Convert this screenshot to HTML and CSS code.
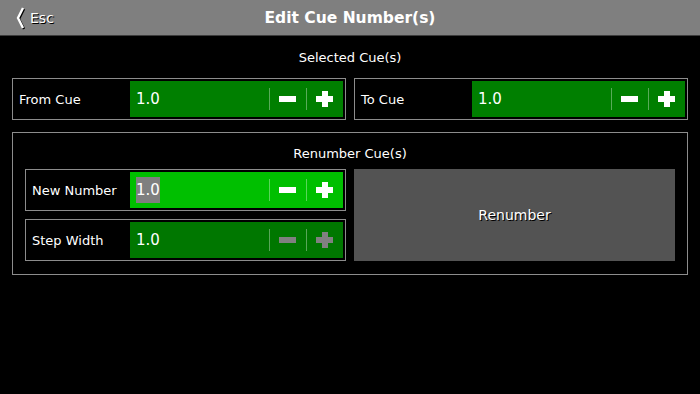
FILE: index.html
```html
<!DOCTYPE html>
<html lang="en">
<head>
  <meta charset="UTF-8">
  <title>Edit Cue Number(s)</title>
  <link rel="stylesheet" href="styles.css">
</head>
<body>
  <div class="header">
    <div class="esc">
      <svg width="9" height="22" viewBox="0 0 9 22"><polyline points="7,1 2,11 7,21" fill="none" stroke="#fff" stroke-width="2.4"/></svg>
      <span>Esc</span>
    </div>
    <h1>Edit Cue Number(s)</h1>
  </div>

  <div class="content">
    <div class="section-title">Selected Cue(s)</div>
    <div class="pair">
      <div class="field">
        <div class="label">From Cue</div>
        <div class="input">
          <span class="value">1.0</span>
          <span class="sep"></span><span class="btn minus"></span>
          <span class="sep"></span><span class="btn plus"></span>
        </div>
      </div>
      <div class="field">
        <div class="label">To Cue</div>
        <div class="input">
          <span class="value">1.0</span>
          <span class="sep"></span><span class="btn minus"></span>
          <span class="sep"></span><span class="btn plus"></span>
        </div>
      </div>
    </div>

    <div class="group">
      <div class="section-title">Renumber Cue(s)</div>
      <div class="pair">
        <div class="stack">
          <div class="field">
            <div class="label">New Number</div>
            <div class="input active">
              <span class="value"><span class="sel">1.0</span></span>
              <span class="sep"></span><span class="btn minus"></span>
              <span class="sep"></span><span class="btn plus"></span>
            </div>
          </div>
          <div class="field">
            <div class="label">Step Width</div>
            <div class="input dim">
              <span class="value">1.0</span>
              <span class="sep"></span><span class="btn minus off"></span>
              <span class="sep"></span><span class="btn plus off"></span>
            </div>
          </div>
        </div>
        <button class="renumber">Renumber</button>
      </div>
    </div>
  </div>
</body>
</html>
```

FILE: styles.css
```css
body {
  margin: 0;
  background-color: #000;
  color: #fff;
  font-family: "DejaVu Sans", sans-serif;
  font-size: 13px;
}
.header {
  height: 35px;
  background-color: #7f7f7f;
  border-bottom: 1px solid #3c3c3c;
  display: flex;
  align-items: center;
  justify-content: center;
  position: relative;
}
.header h1 {
  margin: 0;
  font-size: 15.5px;
  font-weight: bold;
}
.esc {
  position: absolute;
  left: 16px;
  top: 7px;
  display: flex;
  align-items: center;
  gap: 5px;
  font-size: 14px;
  text-shadow: 1px 1px 0 #000;
}
.esc svg {
  filter: drop-shadow(1px 1px 0 #000);
}
.content {
  padding: 0 12px;
}
.section-title {
  height: 42px;
  display: flex;
  align-items: center;
  justify-content: center;
}
.pair {
  display: flex;
  gap: 8px;
}
.pair > * {
  flex: 1;
}
.field {
  height: 42px;
  box-sizing: border-box;
  border: 1px solid #8c8c8c;
  padding: 2px;
  display: flex;
}
.label {
  width: 115px;
  padding-left: 4px;
  box-sizing: border-box;
  display: flex;
  align-items: center;
}
.group .label {
  width: 102px;
}
.input {
  flex: 1;
  background-color: #007f00;
  display: flex;
  align-items: center;
}
.input.active {
  background-color: #00bf00;
}
.input.dim {
  background-color: #007700;
}
.value {
  flex: 1;
  padding-left: 6px;
  font-size: 15px;
}
.sel {
  background-color: #7f7f7f;
  padding: 4px 0;
}
.sep {
  width: 1px;
  height: 22px;
  background-color: rgba(255, 255, 255, 0.35);
}
.btn {
  width: 36px;
  height: 16px;
  position: relative;
}
.btn::before, .plus::after {
  content: "";
  position: absolute;
  background-color: #fff;
}
.btn::before {
  left: 9px;
  top: 5px;
  width: 17px;
  height: 6px;
}
.plus::after {
  left: 15px;
  top: 0;
  width: 6px;
  height: 16px;
}
.btn.off::before, .btn.off::after {
  background-color: #808080;
}
.group {
  margin-top: 12px;
  border: 1px solid #8c8c8c;
  padding: 0 12px 13px;
}
.group .section-title {
  height: 36px;
  padding-top: 4px;
  box-sizing: border-box;
}
.stack {
  display: flex;
  flex-direction: column;
  gap: 8px;
}
.renumber {
  padding: 0;
  background-color: #535353;
  border: none;
  color: #fff;
  font-family: "DejaVu Sans", sans-serif;
  font-size: 14px;
  text-shadow: 1px 1px 0 #000;
}
```
